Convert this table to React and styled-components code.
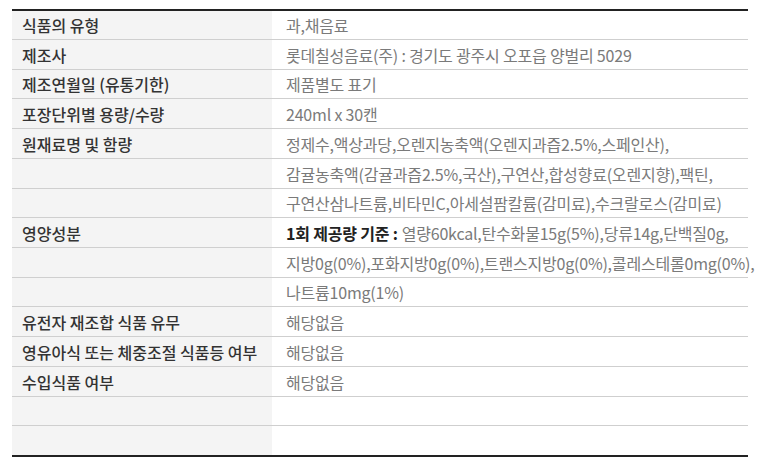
import React from 'react';
import styled, { createGlobalStyle } from 'styled-components';

const GlobalStyle = createGlobalStyle`
    body {
        margin: 0;
        background: #ffffff;
        font-family: "Noto Sans CJK KR", "Noto Sans", sans-serif;
    }
`;

const Page = styled.div`
    padding: 9px 12px 0 12px;
    width: 736px;
`;

const Table = styled.div`
    border-top: 2px solid #222222;
    border-bottom: 2px solid #222222;
`;

// row heights vary by a pixel so the 15 rows fill the 444px body
const Row = styled.div`
    display: flex;
    height: ${p => p.$h}px;
    box-sizing: border-box;
    border-top: ${p => (p.$first ? 'none' : '1px solid #cfcfcf')};
`;

const Label = styled.div`
    width: 260px;
    flex: none;
    box-sizing: border-box;
    padding-left: 10px;
    background-color: #f4f4f4;
    color: #333333;
    font-size: 16px;
    font-weight: 500;
    display: flex;
    align-items: center;
    white-space: nowrap;
`;

const Value = styled.div`
    flex: 1;
    padding-left: 14px;
    color: #7a7a7a;
    font-size: 16px;
    font-weight: 400;
    display: flex;
    align-items: center;
    white-space: nowrap;
    letter-spacing: -0.2px;
`;

const Strong = styled.b`
    color: #222222;
    font-weight: 700;
    margin-right: 4px;
`;

const rows = [
    ['식품의 유형', '과,채음료'],
    ['제조사', '롯데칠성음료(주) : 경기도 광주시 오포읍 양벌리 5029'],
    ['제조연월일 (유통기한)', '제품별도 표기'],
    ['포장단위별 용량/수량', '240ml x 30캔'],
    ['원재료명 및 함량', '정제수,액상과당,오렌지농축액(오렌지과즙2.5%,스페인산),'],
    ['', '감귤농축액(감귤과즙2.5%,국산),구연산,합성향료(오렌지향),팩틴,'],
    ['', '구연산삼나트륨,비타민C,아세설팜칼륨(감미료),수크랄로스(감미료)'],
    ['영양성분', <><Strong>1회 제공량 기준 :</Strong>열량60kcal,탄수화물15g(5%),당류14g,단백질0g,</>],
    ['', '지방0g(0%),포화지방0g(0%),트랜스지방0g(0%),콜레스테롤0mg(0%),'],
    ['', '나트륨10mg(1%)'],
    ['유전자 재조합 식품 유무', '해당없음'],
    ['영유아식 또는 체중조절 식품등 여부', '해당없음'],
    ['수입식품 여부', '해당없음'],
    ['', ''],
    ['', ''],
];

const heights = [28, 30, 29, 30, 30, 30, 29, 30, 30, 29, 30, 30, 30, 29, 30];

export default function App() {
    return (
        <Page>
            <GlobalStyle />
            <Table>
                {rows.map((r, i) =>
                    <Row key={i} $first={i === 0} $h={heights[i]}>
                        <Label>{r[0]}</Label>
                        <Value>{r[1]}</Value>
                    </Row>
                )}
            </Table>
        </Page>
    );
}
